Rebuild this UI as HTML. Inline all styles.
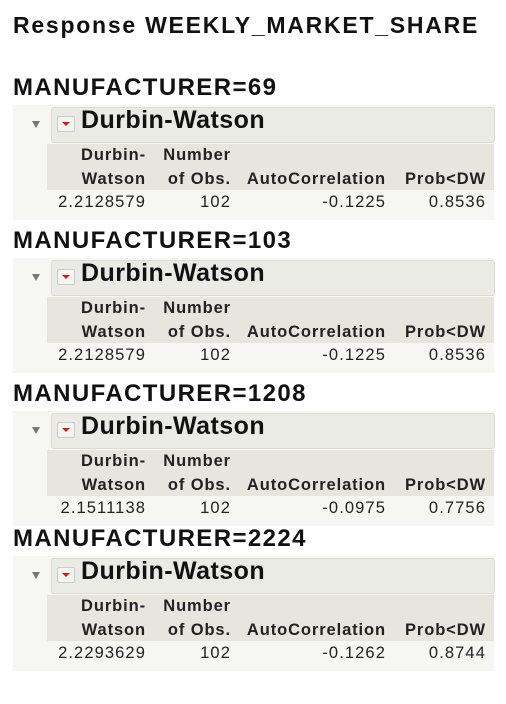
<!DOCTYPE html>
<html><head><meta charset="utf-8"><style>
body{margin:0;width:506px;height:704px;background:#fff;position:relative;overflow:hidden;font-family:"Liberation Sans",Arial,sans-serif;color:#111}
.t{position:absolute;font-weight:bold;white-space:nowrap}
.sec{position:absolute;left:0;width:506px;height:145px}
.mt{position:absolute;left:13px;top:-6px;font-size:24px;font-weight:bold;letter-spacing:1.4px}
.panel{position:absolute;left:13px;top:25px;width:481px;height:115px;background:#f6f6f3}
.hb{position:absolute;left:51px;top:27px;width:442px;height:34px;background:#ebebe6;border:1px solid #dcdcd6;border-radius:3px}
.tri{position:absolute;left:32px;top:41px;width:0;height:0;border-left:4px solid transparent;border-right:4px solid transparent;border-top:7px solid #777}
.btn{position:absolute;left:57px;top:36px;width:16px;height:14px;background:#f4f4f2;border:1px solid #ccc;border-radius:2px}
.btn:after{content:"";position:absolute;left:4px;top:5px;border-left:4px solid transparent;border-right:4px solid transparent;border-top:4px solid #d51a1a}
.hd{position:absolute;left:81px;top:26px;font-size:25px;font-weight:bold;letter-spacing:0.45px}
.th{position:absolute;left:47px;top:64px;width:447px;height:46px;background:#e6e6df}
.c{position:absolute;font-size:16.5px;font-weight:bold;text-align:right;white-space:nowrap;color:#222;letter-spacing:0.9px}
.d{position:absolute;font-size:16.5px;text-align:right;white-space:nowrap;color:#222;letter-spacing:1.1px}
</style></head><body>
<div class="t" style="left:13px;top:12px;font-size:23px;letter-spacing:1.75px">Response WEEKLY_MARKET_SHARE</div>

<div class="sec" style="top:80px">
<div class="mt">MANUFACTURER=69</div>
<div class="panel"></div><div class="hb"></div><div class="tri"></div><div class="btn"></div>
<div class="hd">Durbin-Watson</div><div class="th"></div>
<div class="c" style="right:360px;top:66px">Durbin-</div><div class="c" style="right:360px;top:90px">Watson</div>
<div class="c" style="right:275px;top:66px">Number</div><div class="c" style="right:275px;top:90px">of Obs.</div>
<div class="c" style="right:120px;top:90px">AutoCorrelation</div><div class="c" style="right:20px;top:90px">Prob&lt;DW</div>
<div class="d" style="right:360px;top:113px">2.2128579</div><div class="d" style="right:275px;top:113px">102</div>
<div class="d" style="right:120px;top:113px">-0.1225</div><div class="d" style="right:20px;top:113px">0.8536</div>
</div>

<div class="sec" style="top:233px">
<div class="mt">MANUFACTURER=103</div>
<div class="panel"></div><div class="hb"></div><div class="tri"></div><div class="btn"></div>
<div class="hd">Durbin-Watson</div><div class="th"></div>
<div class="c" style="right:360px;top:66px">Durbin-</div><div class="c" style="right:360px;top:90px">Watson</div>
<div class="c" style="right:275px;top:66px">Number</div><div class="c" style="right:275px;top:90px">of Obs.</div>
<div class="c" style="right:120px;top:90px">AutoCorrelation</div><div class="c" style="right:20px;top:90px">Prob&lt;DW</div>
<div class="d" style="right:360px;top:113px">2.2128579</div><div class="d" style="right:275px;top:113px">102</div>
<div class="d" style="right:120px;top:113px">-0.1225</div><div class="d" style="right:20px;top:113px">0.8536</div>
</div>

<div class="sec" style="top:386px">
<div class="mt">MANUFACTURER=1208</div>
<div class="panel"></div><div class="hb"></div><div class="tri"></div><div class="btn"></div>
<div class="hd">Durbin-Watson</div><div class="th"></div>
<div class="c" style="right:360px;top:66px">Durbin-</div><div class="c" style="right:360px;top:90px">Watson</div>
<div class="c" style="right:275px;top:66px">Number</div><div class="c" style="right:275px;top:90px">of Obs.</div>
<div class="c" style="right:120px;top:90px">AutoCorrelation</div><div class="c" style="right:20px;top:90px">Prob&lt;DW</div>
<div class="d" style="right:360px;top:113px">2.1511138</div><div class="d" style="right:275px;top:113px">102</div>
<div class="d" style="right:120px;top:113px">-0.0975</div><div class="d" style="right:20px;top:113px">0.7756</div>
</div>

<div class="sec" style="top:531px">
<div class="mt">MANUFACTURER=2224</div>
<div class="panel"></div><div class="hb"></div><div class="tri"></div><div class="btn"></div>
<div class="hd">Durbin-Watson</div><div class="th"></div>
<div class="c" style="right:360px;top:66px">Durbin-</div><div class="c" style="right:360px;top:90px">Watson</div>
<div class="c" style="right:275px;top:66px">Number</div><div class="c" style="right:275px;top:90px">of Obs.</div>
<div class="c" style="right:120px;top:90px">AutoCorrelation</div><div class="c" style="right:20px;top:90px">Prob&lt;DW</div>
<div class="d" style="right:360px;top:113px">2.2293629</div><div class="d" style="right:275px;top:113px">102</div>
<div class="d" style="right:120px;top:113px">-0.1262</div><div class="d" style="right:20px;top:113px">0.8744</div>
</div>
</body></html>
